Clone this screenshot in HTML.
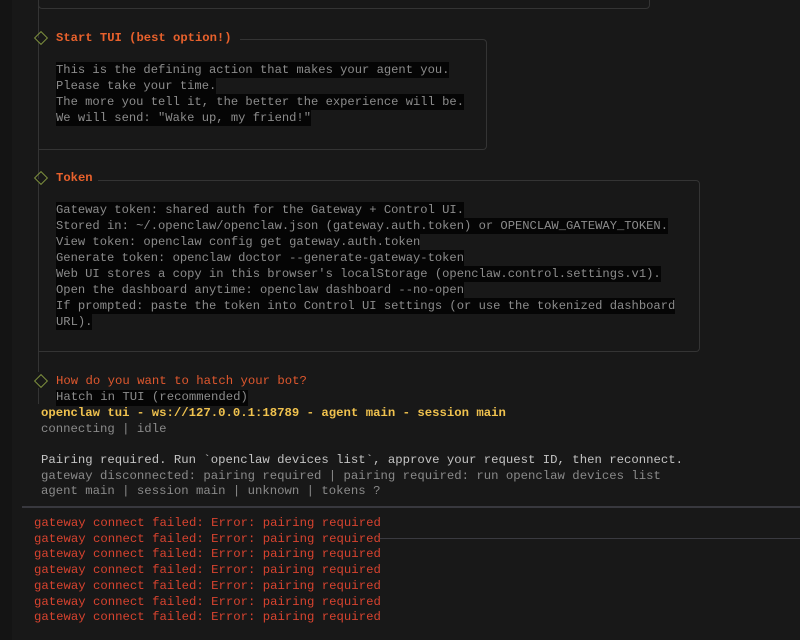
<!DOCTYPE html>
<html><head><meta charset="utf-8"><style>
html,body{margin:0;padding:0;}
body{width:800px;height:640px;background:#181818;position:relative;overflow:hidden;font-family:"Liberation Mono",monospace;}
.strip{position:absolute;left:0;top:0;width:12px;height:640px;background:#141414;}
.a{position:absolute;white-space:pre;}
.box{position:absolute;border:1px solid #343434;border-radius:4px;}
.vl{position:absolute;width:1px;background:#343434;}
.hl{position:absolute;height:1px;background:#343434;}
.dia{position:absolute;width:8px;height:8px;border:1.5px solid #7d8f3e;transform:rotate(45deg);}
.t{font-size:12.2px;font-weight:bold;color:#e8612c;}
.b{font-size:12.15px;line-height:16px;color:#8c8c8c;}
.b span{background:#050505;padding:1px 0;}
.c{font-size:12.3px;line-height:15.7px;}
.mask{position:absolute;height:4px;background:#181818;}
</style></head><body>
<div class="strip"></div>
<div class="box" style="left:38px;top:-10px;width:610px;height:17px;"></div>
<div class="vl" style="left:38px;top:0;height:372px;"></div>

<div class="box" style="left:38px;top:39px;width:448px;height:109px;border-left:none;border-top-left-radius:0;border-bottom-left-radius:0;"></div>
<div class="mask" style="left:38px;top:38px;width:202px;"></div>
<div class="dia" style="left:36px;top:33px;"></div>
<div class="a t" style="left:56px;top:31px;">Start TUI (best option!)</div>
<div class="a b" style="left:56px;top:62px;"><span>This is the defining action that makes your agent you.</span>
<span>Please take your time.</span>
<span>The more you tell it, the better the experience will be.</span>
<span>We will send: "Wake up, my friend!"</span></div>

<div class="box" style="left:38px;top:180px;width:661px;height:170px;border-left:none;border-top-left-radius:0;border-bottom-left-radius:0;"></div>
<div class="mask" style="left:38px;top:179px;width:60px;"></div>
<div class="dia" style="left:36px;top:173px;"></div>
<div class="a t" style="left:56px;top:171px;">Token</div>
<div class="a b" style="left:56px;top:202px;"><span>Gateway token: shared auth for the Gateway + Control UI.</span>
<span>Stored in: ~/.openclaw/openclaw.json (gateway.auth.token) or OPENCLAW_GATEWAY_TOKEN.</span>
<span>View token: openclaw config get gateway.auth.token</span>
<span>Generate token: openclaw doctor --generate-gateway-token</span>
<span>Web UI stores a copy in this browser's localStorage (openclaw.control.settings.v1).</span>
<span>Open the dashboard anytime: openclaw dashboard --no-open</span>
<span>If prompted: paste the token into Control UI settings (or use the tokenized dashboard</span>
<span>URL).</span></div>

<div class="dia" style="left:36px;top:376px;"></div>
<div class="vl" style="left:38px;top:388px;height:16px;"></div>
<div class="a c" style="left:56px;top:374px;color:#e0582e;">How do you want to hatch your bot?</div>
<div class="a c" style="left:56px;top:390px;color:#8c8c8c;background:#050505;">Hatch in TUI (recommended)</div>
<div class="a c" style="left:41px;top:406px;color:#f0c24e;font-weight:bold;">openclaw tui - ws://127.0.0.1:18789 - agent main - session main</div>
<div class="a c" style="left:41px;top:422px;color:#8a8a8a;">connecting | idle</div>
<div class="a c" style="left:41px;top:453px;color:#c4c4c4;">Pairing required. Run `openclaw devices list`, approve your request ID, then reconnect.</div>
<div class="a c" style="left:41px;top:469px;color:#8a8a8a;">gateway disconnected: pairing required | pairing required: run openclaw devices list</div>
<div class="a c" style="left:41px;top:484px;color:#8a8a8a;">agent main | session main | unknown | tokens ?</div>
<div class="hl" style="left:22px;top:506px;width:778px;height:2px;background:#38383e;"></div>
<div class="hl" style="left:380px;top:538px;width:420px;background:#3a3a40;"></div>
<div class="a c" style="left:34px;top:516px;color:#d8432f;">gateway connect failed: Error: pairing required
gateway connect failed: Error: pairing required
gateway connect failed: Error: pairing required
gateway connect failed: Error: pairing required
gateway connect failed: Error: pairing required
gateway connect failed: Error: pairing required
gateway connect failed: Error: pairing required</div>
</body></html>
